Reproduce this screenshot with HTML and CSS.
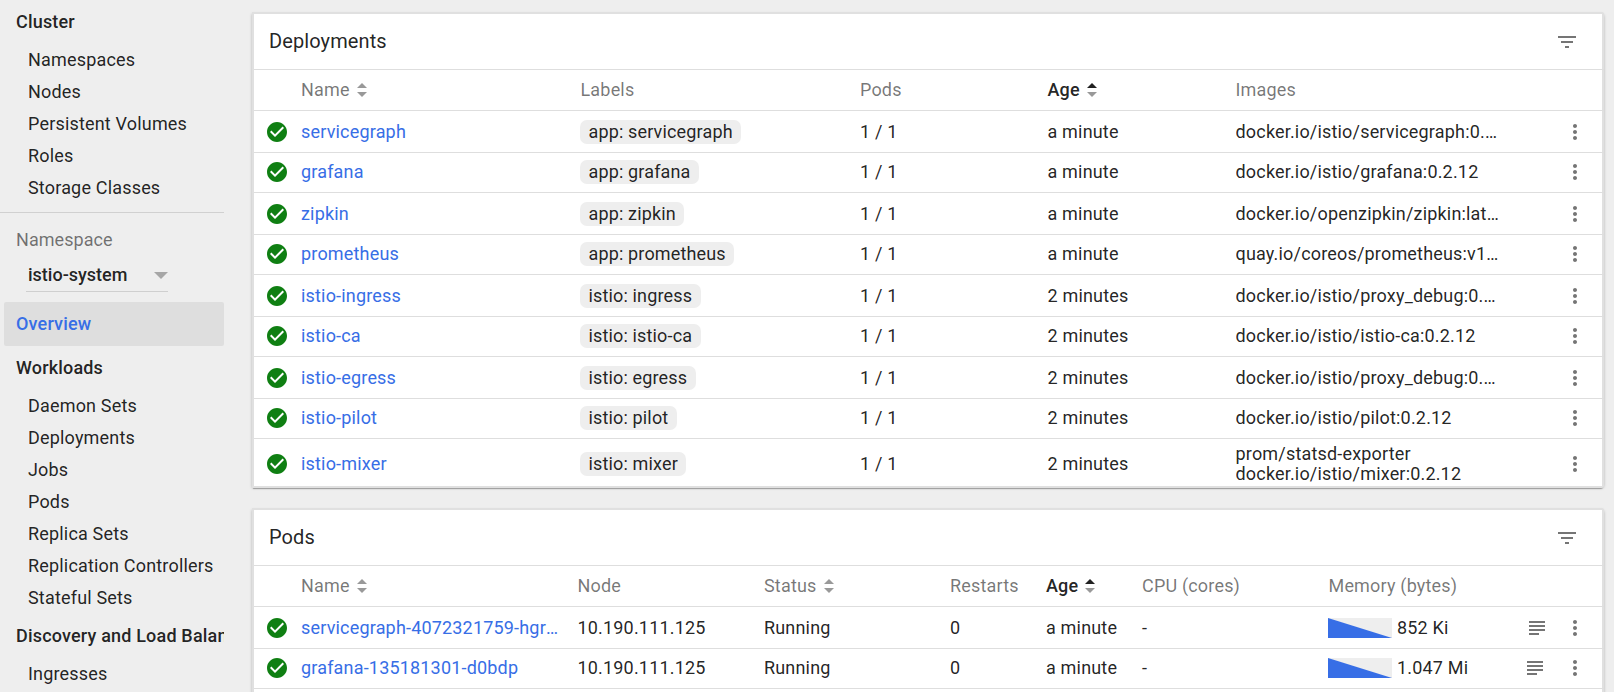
FILE: index.html
```html
<!DOCTYPE html>
<html lang="en">
<head>
<meta charset="utf-8">
<title>Overview - Kubernetes Dashboard</title>
<link rel="stylesheet" href="styles.css">
</head>
<body>
<svg class="defs" aria-hidden="true">
  <symbol id="check" viewBox="0 0 24 24"><path d="M12 2C6.480 2 2 6.480 2 12s4.480 10 10 10 10-4.480 10-10S17.520 2 12 2zm-2 15l-5-5 1.410-1.410L10 14.170l7.590-7.590L19 8l-9 9z"/></symbol>
  <symbol id="more" viewBox="0 0 24 24"><path d="M12 8c1.100 0 2-.9 2-2s-.9-2-2-2-2 .9-2 2 .9 2 2 2zm0 2c-1.100 0-2 .9-2 2s.9 2 2 2 2-.9 2-2-.9-2-2-2zm0 6c-1.100 0-2 .9-2 2s.9 2 2 2 2-.9 2-2-.9-2-2-2z"/></symbol>
  <symbol id="filter" viewBox="0 0 24 24"><path d="M10 18h4v-2h-4v2zM3 6v2h18V6H3zm3 7h12v-2H6v2z"/></symbol>
  <symbol id="logs" viewBox="0 0 24 24"><path d="M14 17H4v2h10v-2zm6-8H4v2h16V9zM4 15h16v-2H4v2zM4 5v2h16V5H4z"/></symbol>
  <symbol id="sort" viewBox="0 0 10 14"><path class="up" d="M0 5L5 0l5 5z"/><path class="down" d="M0 9l5 5 5-5z"/></symbol>
  <symbol id="usage" viewBox="0 0 64 20"><path d="M0 0l64 20H0z"/></symbol>
</svg>
<div class="app">
  <nav class="sidebar">
    <a class="nav-group">Cluster</a>
    <a class="nav-item">Namespaces</a>
    <a class="nav-item">Nodes</a>
    <a class="nav-item">Persistent Volumes</a>
    <a class="nav-item">Roles</a>
    <a class="nav-item">Storage Classes</a>
    <div class="nav-divider"></div>
    <div class="namespace-label">Namespace</div>
    <div class="namespace-select"><span>istio-system</span><i class="caret"></i></div>
    <a class="nav-group active">Overview</a>
    <a class="nav-group">Workloads</a>
    <a class="nav-item">Daemon Sets</a>
    <a class="nav-item">Deployments</a>
    <a class="nav-item">Jobs</a>
    <a class="nav-item">Pods</a>
    <a class="nav-item">Replica Sets</a>
    <a class="nav-item">Replication Controllers</a>
    <a class="nav-item">Stateful Sets</a>
    <a class="nav-group">Discovery and Load Balancing</a>
    <a class="nav-item">Ingresses</a>
  </nav>
  <main class="content">
    <section class="card deployments">
      <header class="card-title"><h2>Deployments</h2><svg class="icon"><use href="#filter"/></svg></header>
      <div class="row head"><span></span><span class="th">Name<svg class="sort"><use href="#sort"/></svg></span><span class="inset">Labels</span><span>Pods</span><span class="th sorted">Age<svg class="sort"><use href="#sort"/></svg></span><span>Images</span><span></span></div>
      <div class="row"><svg class="icon ok"><use href="#check"/></svg><a class="cell">servicegraph</a><span><b class="chip">app: servicegraph</b></span><span>1 / 1</span><span>a minute</span><span class="cell">docker.io/istio/servicegraph:0.2.12</span><svg class="icon"><use href="#more"/></svg></div>
      <div class="row alt"><svg class="icon ok"><use href="#check"/></svg><a class="cell">grafana</a><span><b class="chip">app: grafana</b></span><span>1 / 1</span><span>a minute</span><span class="cell">docker.io/istio/grafana:0.2.12</span><svg class="icon"><use href="#more"/></svg></div>
      <div class="row"><svg class="icon ok"><use href="#check"/></svg><a class="cell">zipkin</a><span><b class="chip">app: zipkin</b></span><span>1 / 1</span><span>a minute</span><span class="cell">docker.io/openzipkin/zipkin:latest</span><svg class="icon"><use href="#more"/></svg></div>
      <div class="row alt"><svg class="icon ok"><use href="#check"/></svg><a class="cell">prometheus</a><span><b class="chip">app: prometheus</b></span><span>1 / 1</span><span>a minute</span><span class="cell">quay.io/coreos/prometheus:v1.1.1</span><svg class="icon"><use href="#more"/></svg></div>
      <div class="row"><svg class="icon ok"><use href="#check"/></svg><a class="cell">istio-ingress</a><span><b class="chip">istio: ingress</b></span><span>1 / 1</span><span>2 minutes</span><span class="cell">docker.io/istio/proxy_debug:0.2.12</span><svg class="icon"><use href="#more"/></svg></div>
      <div class="row alt"><svg class="icon ok"><use href="#check"/></svg><a class="cell">istio-ca</a><span><b class="chip">istio: istio-ca</b></span><span>1 / 1</span><span>2 minutes</span><span class="cell">docker.io/istio/istio-ca:0.2.12</span><svg class="icon"><use href="#more"/></svg></div>
      <div class="row"><svg class="icon ok"><use href="#check"/></svg><a class="cell">istio-egress</a><span><b class="chip">istio: egress</b></span><span>1 / 1</span><span>2 minutes</span><span class="cell">docker.io/istio/proxy_debug:0.2.12</span><svg class="icon"><use href="#more"/></svg></div>
      <div class="row alt"><svg class="icon ok"><use href="#check"/></svg><a class="cell">istio-pilot</a><span><b class="chip">istio: pilot</b></span><span>1 / 1</span><span>2 minutes</span><span class="cell">docker.io/istio/pilot:0.2.12</span><svg class="icon"><use href="#more"/></svg></div>
      <div class="row tall"><svg class="icon ok"><use href="#check"/></svg><a class="cell">istio-mixer</a><span><b class="chip">istio: mixer</b></span><span>1 / 1</span><span>2 minutes</span><span class="cell">prom/statsd-exporter<br>docker.io/istio/mixer:0.2.12</span><svg class="icon"><use href="#more"/></svg></div>
    </section>
    <section class="card pods">
      <header class="card-title"><h2>Pods</h2><svg class="icon"><use href="#filter"/></svg></header>
      <div class="row head"><span></span><span class="th">Name<svg class="sort"><use href="#sort"/></svg></span><span>Node</span><span class="th">Status<svg class="sort"><use href="#sort"/></svg></span><span>Restarts</span><span class="th sorted">Age<svg class="sort"><use href="#sort"/></svg></span><span>CPU (cores)</span><span class="inset">Memory (bytes)</span><span></span><span></span></div>
      <div class="row"><svg class="icon ok"><use href="#check"/></svg><a class="cell">servicegraph-4072321759-hgrlp</a><span>10.190.111.125</span><span>Running</span><span>0</span><span>a minute</span><span>-</span><span class="memory"><svg class="usage"><use href="#usage"/></svg>852 Ki</span><svg class="icon logs"><use href="#logs"/></svg><svg class="icon"><use href="#more"/></svg></div>
      <div class="row alt"><svg class="icon ok"><use href="#check"/></svg><a class="cell">grafana-135181301-d0bdp</a><span>10.190.111.125</span><span>Running</span><span>0</span><span>a minute</span><span>-</span><span class="memory"><svg class="usage"><use href="#usage"/></svg>1.047 Mi</span><svg class="icon logs shifted"><use href="#logs"/></svg><svg class="icon"><use href="#more"/></svg></div>
      <div class="row"></div>
    </section>
  </main>
</div>
</body>
</html>
```

FILE: styles.css
```css
* { box-sizing: border-box; }
body {
  margin: 0;
  height: 692px;
  overflow: hidden;
  background: #eee;
  color: rgba(0, 0, 0, .87);
  font: 18px/20px Roboto, "Noto Sans", sans-serif;
  letter-spacing: .18px;
}
.defs { position: absolute; width: 0; height: 0; }
.app { display: flex; height: 692px; overflow: hidden; }

.sidebar { flex: none; width: 224px; overflow: hidden; white-space: nowrap; }
.nav-group, .nav-item { display: block; }
.nav-group { height: 44px; padding-left: 16px; line-height: 44px; font-weight: 500; overflow: hidden; }
.nav-item { height: 32px; padding-left: 28px; line-height: 32px; }
.nav-group.active { margin-left: 4px; padding-left: 12px; background: #dedede; border-radius: 2px; color: #376ee6; }
.nav-divider { margin-top: 8px; height: 1px; background: #d0d0d0; }
.namespace-label { margin-top: 11px; padding-left: 16px; line-height: 32px; letter-spacing: .05px; color: rgba(0, 0, 0, .54); }
.namespace-select {
  display: flex;
  align-items: center;
  justify-content: space-between;
  width: 142px;
  height: 33px;
  margin: 3px 0 10px 26px;
  padding-left: 2px;
  border-bottom: 1px solid #cfcfcf;
  font-weight: 500;
  letter-spacing: 0;
}
.caret { border: 7px solid transparent; border-top-color: #a6a6a6; border-bottom: 0; }

.content { flex: none; padding: 14px 0 0 30px; }
.card {
  width: 1350px;
  margin-bottom: 24px;
  background: #fff;
  border-right: 2px solid #e0e0e0;
  border-radius: 0 2px 2px 0;
  box-shadow:
    -2px 0 0 #e0e0e0,
    -2px -2px 0 #e0e0e0,
    0 -2px 0 #e0e0e0,
    -2px 2px 0 #e0e0e0,
    0 2px 0 #e0e0e0,
    -1px 3px 1px 0 rgba(0, 0, 0, .28),
    -1px 1px 3px 1px rgba(0, 0, 0, .26);
}
.card-title { display: flex; align-items: center; justify-content: space-between; height: 55px; padding: 0 23px 0 15px; }
.card-title h2 { margin: 0; padding-bottom: 2px; font-size: 20px; font-weight: 400; letter-spacing: .1px; }
.row {
  display: grid;
  align-items: center;
  width: 1350px;
  height: 42px;
  padding: 1px 0 0 11px;
  border-top: 1px solid #dedede;
  white-space: nowrap;
}
.deployments .row { grid-template-columns: 36px 279px 280px 187.500px 188px 327.500px 24px; }
.pods .row { grid-template-columns: 36px 276.500px 186.500px 186px 96px 96px 186px 197px 38px 24px; }
.row.head { height: 41px; padding-top: 0; color: rgba(0, 0, 0, .54); }
.row.alt { height: 40px; padding-top: 0; padding-bottom: 1px; }
.row.tall { height: 48px; padding-top: 3px; }
.row a { color: #376ee6; }
.cell { overflow: hidden; text-overflow: ellipsis; }
.deployments .cell { max-width: 264px; }
.pods .cell { max-width: 258px; }
.th { display: flex; align-items: center; }
.row .sorted { color: rgba(0, 0, 0, .87); font-weight: 500; }
.sort { width: 10px; height: 14px; margin-left: 7px; fill: #999; color: #999; }
.sorted .sort { color: #212121; }
.up { fill: currentColor; }
.icon { display: block; width: 24px; height: 24px; fill: #757575; }
.icon.ok { fill: #0f7f12; }
.chip { display: block; width: max-content; height: 24px; padding: 0 8.500px; border-radius: 7px; background: #eee; line-height: 24px; font-weight: 400; letter-spacing: .15px; }
.inset { padding-left: .5px; }
.memory { display: flex; align-items: center; gap: 5px; }
.usage { width: 64px; height: 20px; background: #eee; fill: #376ee6; }
.logs.shifted { margin-left: -2px; }
```
